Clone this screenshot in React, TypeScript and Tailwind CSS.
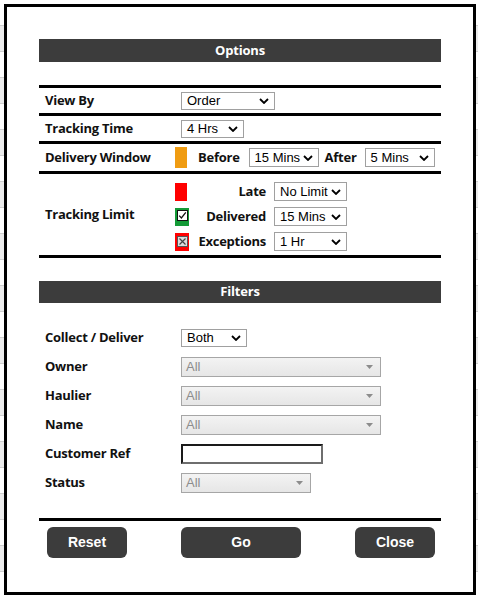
import React from "react";

const labelCls =
  "font-['Open_Sans',sans-serif] font-bold text-[13px] tracking-[-0.25px] text-[#111]";

const Chevron: React.FC = () => (
  <svg width="10" height="6" viewBox="0 0 10 6" className="shrink-0">
    <path d="M1 1 L5 5 L9 1" fill="none" stroke="#000" strokeWidth="1.8" />
  </svg>
);

const Select: React.FC<{ value: string; w: string; h?: string }> = ({
  value,
  w,
  h = "h-[19px]",
}) => (
  <div
    className={`${w} ${h} flex items-center justify-between border border-[#a0a0a0] bg-white pl-[5px] pr-[5px] font-['Liberation_Sans',Arial,sans-serif] text-[13px] leading-none text-black`}
  >
    <span>{value}</span>
    <Chevron />
  </div>
);

const DisabledSelect: React.FC<{ w: string }> = ({ w }) => (
  <div
    className={`${w} h-[20px] flex items-center justify-between border border-[#a6a6a6] bg-linear-to-b from-[#f3f3f3] to-[#e6e6e6] pl-[4px] pr-[7px] font-['Liberation_Sans',Arial,sans-serif] text-[13px] leading-none text-[#8c8c8c]`}
  >
    <span>All</span>
    <svg width="7" height="4" viewBox="0 0 7 4">
      <path d="M0 0 L7 0 L3.5 4 Z" fill="#8c8c8c" />
    </svg>
  </div>
);

const SectionHeader: React.FC<{ title: string; h: string }> = ({ title, h }) => (
  <div
    className={`${h} flex items-center justify-center bg-[#3c3c3c] font-['Open_Sans',sans-serif] text-[13px] font-bold tracking-[-0.2px] text-white`}
  >
    {title}
  </div>
);

const CheckedIcon: React.FC = () => (
  <div className="flex h-[18px] w-[14px] items-start justify-center bg-[#139a36] pt-[2px]">
    <svg width="11" height="11" viewBox="0 0 11 11">
      <rect x="0.5" y="0.5" width="10" height="10" fill="#fff" stroke="#111" />
      <path d="M2.2 5.6 L4.4 7.9 L8.8 2.4" fill="none" stroke="#111" strokeWidth="1.3" />
    </svg>
  </div>
);

const CrossIcon: React.FC = () => (
  <div className="flex h-[18px] w-[14px] items-start justify-center bg-[#ff0000] pt-[3px]">
    <svg width="11" height="11" viewBox="0 0 11 11">
      <rect x="0.5" y="0.5" width="10" height="10" fill="#dcdcdc" stroke="#555" />
      <path d="M2.5 2.5 L8.5 8.5 M8.5 2.5 L2.5 8.5" stroke="#444" strokeWidth="1.2" />
    </svg>
  </div>
);

const FilterRow: React.FC<{ label: string; children: React.ReactNode }> = ({
  label,
  children,
}) => (
  <div className="flex h-[29px] items-center">
    <div className={`w-[142px] pl-[6px] ${labelCls}`}>{label}</div>
    {children}
  </div>
);

const Button: React.FC<{ label: string; w: string; ml: string }> = ({
  label,
  w,
  ml,
}) => (
  <div
    className={`${w} ${ml} flex h-[31px] items-center justify-center rounded-[6px] bg-[#3c3c3c] font-['Liberation_Sans',Arial,sans-serif] text-[14px] font-bold text-white`}
  >
    {label}
  </div>
);

const App: React.FC = () => {
  const rows = Array.from({ length: 22 });

  return (
    <div className="relative h-[598px] w-[478px] overflow-hidden bg-white">
      {/* page behind the dialog */}
      <div className="flex flex-col pt-[25px]">
        {rows.map((_, i) => (
          <div
            key={i}
            className={`h-[26px] border-t border-[#cfcfcf] ${
              i % 2 === 0 ? "bg-[#ebebeb]" : "bg-white"
            }`}
          />
        ))}
      </div>

      {/* dialog */}
      <div className="absolute left-[4px] top-[4px] h-[591px] w-[472px] border-[3px] border-black bg-white px-[32px] pt-[32px]">
        <SectionHeader title="Options" h="h-[23px]" />

        <div className="mt-[23px] border-t-[3px] border-black">
          <div className="flex h-[28px] items-center border-b-[3px] border-black">
            <div className={`w-[142px] pl-[6px] ${labelCls}`}>View By</div>
            <Select value="Order" w="w-[94px]" h="h-[18px]" />
          </div>
          <div className="flex h-[28px] items-center border-b-[3px] border-black">
            <div className={`w-[142px] pl-[6px] ${labelCls}`}>Tracking Time</div>
            <Select value="4 Hrs" w="w-[63px]" h="h-[18px]" />
          </div>
          <div className="flex h-[30px] items-center border-b-[3px] border-black">
            <div className={`w-[136px] pl-[6px] ${labelCls}`}>Delivery Window</div>
            <div className="h-[21px] w-[12px] bg-[#f09c12]" />
            <div className={`ml-[11px] ${labelCls}`}>Before</div>
            <div className="ml-[9px]">
              <Select value="15 Mins" w="w-[70px]" />
            </div>
            <div className={`ml-[6px] ${labelCls}`}>After</div>
            <div className="ml-[8px]">
              <Select value="5 Mins" w="w-[70px]" />
            </div>
          </div>
          <div className="flex h-[84px] items-center border-b-[3px] border-black">
            <div className={`w-[136px] pl-[6px] ${labelCls}`}>Tracking Limit</div>
            <div className="flex flex-col pt-[5px] pb-[1px]">
              <div className="flex h-[25px] items-center">
                <div className="w-[14px]">
                  <div className="h-[18px] w-[12px] bg-[#ff0000]" />
                </div>
                <div className={`w-[77px] text-right ${labelCls}`}>Late</div>
                <div className="ml-[8px]">
                  <Select value="No Limit" w="w-[73px]" />
                </div>
              </div>
              <div className="flex h-[25px] items-center">
                <div className="w-[14px]">
                  <CheckedIcon />
                </div>
                <div className={`w-[77px] text-right ${labelCls}`}>Delivered</div>
                <div className="ml-[8px]">
                  <Select value="15 Mins" w="w-[73px]" />
                </div>
              </div>
              <div className="flex h-[25px] items-center">
                <div className="w-[14px]">
                  <CrossIcon />
                </div>
                <div className={`w-[77px] text-right ${labelCls}`}>Exceptions</div>
                <div className="ml-[8px]">
                  <Select value="1 Hr" w="w-[73px]" />
                </div>
              </div>
            </div>
          </div>
        </div>

        <div className="mt-[23px]">
          <SectionHeader title="Filters" h="h-[22px]" />
        </div>

        <div className="mt-[20px] flex flex-col">
          <FilterRow label="Collect / Deliver">
            <Select value="Both" w="w-[66px]" h="h-[18px]" />
          </FilterRow>
          <FilterRow label="Owner">
            <DisabledSelect w="w-[200px]" />
          </FilterRow>
          <FilterRow label="Haulier">
            <DisabledSelect w="w-[200px]" />
          </FilterRow>
          <FilterRow label="Name">
            <DisabledSelect w="w-[200px]" />
          </FilterRow>
          <FilterRow label="Customer Ref">
            <div className="h-[20px] w-[142px] border-2 border-t-[#1a1a1a] border-l-[#1a1a1a] border-r-[#6e6e6e] border-b-[#6e6e6e] bg-white" />
          </FilterRow>
          <FilterRow label="Status">
            <DisabledSelect w="w-[130px]" />
          </FilterRow>
        </div>

        <div className="mt-[21px] border-t-[3px] border-black" />

        <div className="mt-[6px] flex">
          <Button label="Reset" w="w-[80px]" ml="ml-[8px]" />
          <Button label="Go" w="w-[120px]" ml="ml-[54px]" />
          <Button label="Close" w="w-[80px]" ml="ml-[54px]" />
        </div>
      </div>
    </div>
  );
};

export default App;
